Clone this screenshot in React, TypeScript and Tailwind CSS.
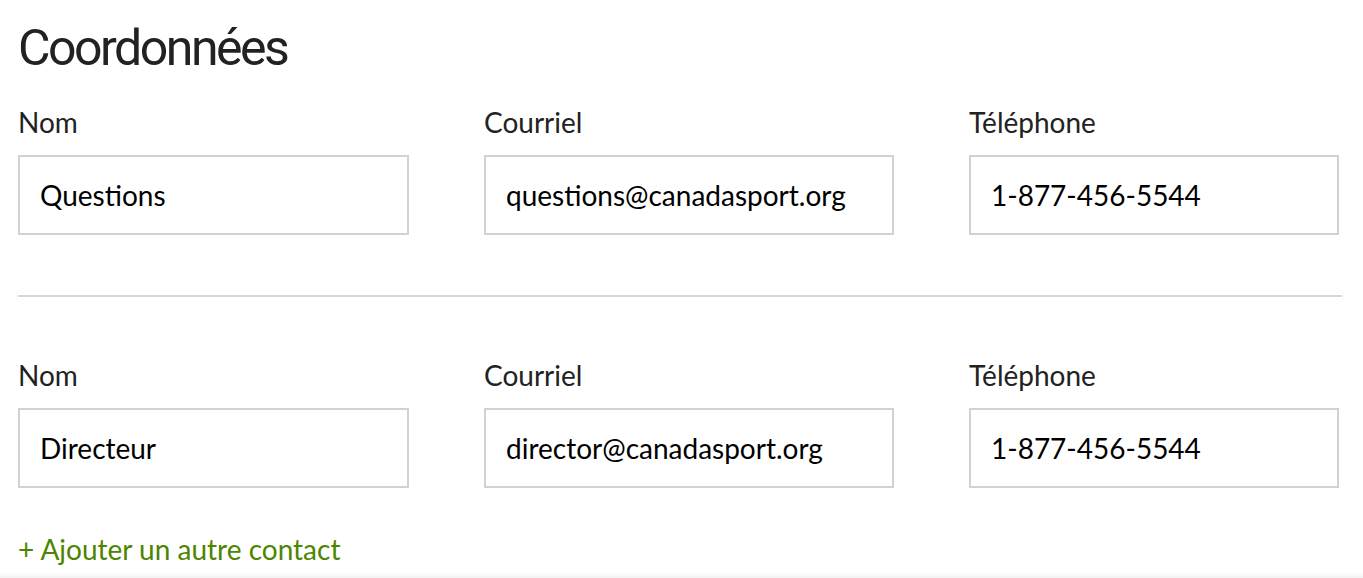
import React from "react";

type Contact = { name: string; email: string; phone: string };

const contacts: Contact[] = [
  { name: "Questions", email: "questions@canadasport.org", phone: "1-877-456-5544" },
  { name: "Directeur", email: "director@canadasport.org", phone: "1-877-456-5544" },
];

const Field = ({ label, value }: { label: string; value: string }) => (
  <div className="flex flex-col">
    <label className="text-[28px] leading-[34px] text-[#222] mb-4">{label}</label>
    <div className="h-[80px] border-2 border-[#d2d2d2] flex items-center px-5 text-[28px] leading-[34px] text-black">
      {value}
    </div>
  </div>
);

const ContactRow = ({ contact }: { contact: Contact }) => (
  <div className="grid grid-cols-[391px_410px_370px] gap-x-[75px]">
    <Field label="Nom" value={contact.name} />
    <Field label="Courriel" value={contact.email} />
    <Field label="Téléphone" value={contact.phone} />
  </div>
);

export default function App() {
  return (
    <div className="relative min-h-[578px] bg-white overflow-hidden" style={{ fontFamily: "Lato, 'Noto Sans', sans-serif" }}>
      <div className="pl-[18px] pr-[21px] pt-[23px]">
        <h2
          className="text-[50px] leading-[50px] text-[#222] mb-[32px] tracking-[-2.5px]"
          style={{ fontFamily: "Roboto, 'Noto Sans', sans-serif" }}
        >
          Coordonnées
        </h2>
        <ContactRow contact={contacts[0]} />
        <div className="h-[2px] bg-[#d6d6d6] mt-[60px] mb-[61px]" />
        <ContactRow contact={contacts[1]} />
        <div className="mt-[44px]">
          <a href="#" className="text-[28px] leading-[34px] text-[#4d8500]">
            + Ajouter un autre contact
          </a>
        </div>
      </div>
      <div className="absolute bottom-0 left-0 right-0 h-[6px] bg-gradient-to-b from-white to-[#f3f3f3]" />
    </div>
  );
}
